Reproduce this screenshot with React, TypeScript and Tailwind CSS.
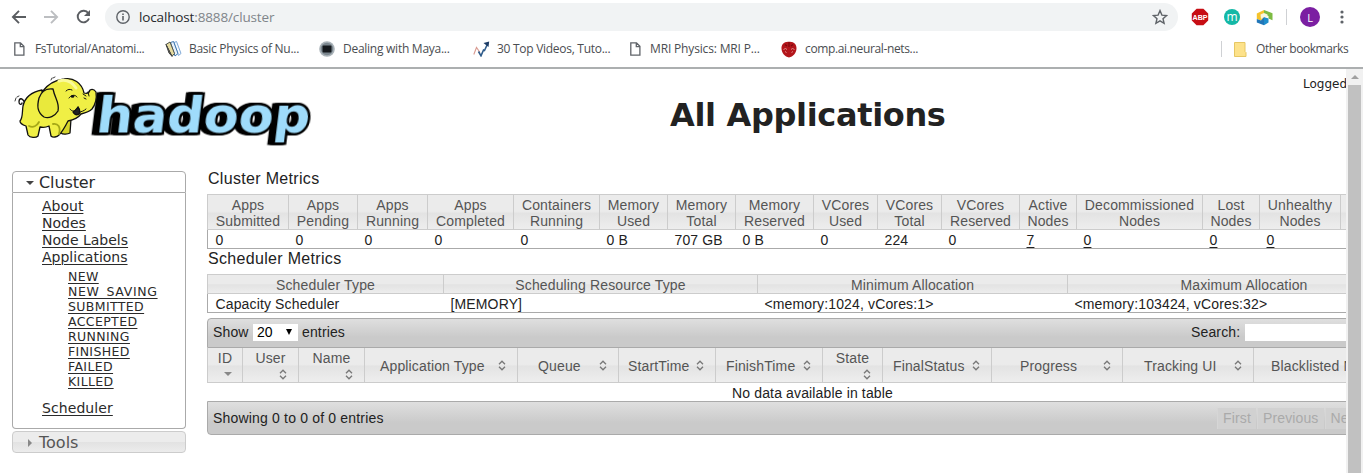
import React from "react";

const Doc = () => (
  <svg width="12" height="14" viewBox="0 0 12 14" fill="#fff" stroke="#5f6368" strokeWidth="1.3">
    <path d="M.8 .8h5.700l3.400 3.500v8.900H.8z M6.300 .8v3.800h3.600" />
  </svg>
);

const Books = () => (
  <svg width="17" height="16" viewBox="0 0 17 16" strokeWidth="1" strokeLinejoin="round">
    <path d="M9 1.500l2.500-1 4.500 12-2.500 2z" fill="#f4f9fe" stroke="#7fa9d6" />
    <path d="M5.500 1.500l3-1 4.500 12-3 2.500z" fill="#e8f1fa" stroke="#3c76ad" />
    <path d="M1 3.500l4-2.500 4.500 11.500L7 15.300z" fill="#e6dba0" stroke="#4c5148" />
    <path d="M1 3.500L7 15.300 4 12z" fill="#77785a" stroke="#444" />
  </svg>
);

const Maya = () => (
  <svg width="16" height="16" viewBox="0 0 16 16">
    <circle cx="8" cy="8" r="7.800" fill="#a9b2b8" />
    <circle cx="8" cy="8" r="6.200" fill="#7b868e" />
    <rect x="3.500" y="4.500" width="9" height="7" rx="1" fill="#15191d" />
  </svg>
);

const Chart = () => (
  <svg width="17" height="16" viewBox="0 0 17 16" fill="none">
    <path d="M.8 13.500L3.500 6.500l3.500 5" stroke="#d99a90" strokeWidth="1.100" />
    <path d="M5.500 10.500l2.500 4.300L10.500 9l1 .5L14.500 3" stroke="#2e5b8a" strokeWidth="1.600" />
    <path d="M10.500 2L16.200.5 15.500 6z" fill="#1d3c66" />
  </svg>
);

const Brain = () => (
  <svg width="16" height="17" viewBox="0 0 16 17">
    <path d="M8 .7C3 .2.3 3.500.5 7.500.7 12 4 16 8 16.400 12 16 15.300 12 15.500 7.500 15.700 3.500 13 .2 8 .7z" fill="#b3161b" />
    <path d="M8 1v5M4 3.500l2 1.500M12 3.500L10 5" stroke="#7c0a0e" strokeWidth="1.200" fill="none" />
    <path d="M2.500 8.500l2-1 1.500 1M10 8.500l1.500-1 2 1M4 10.500l1.500 1M12 10.500l-1.500 1" stroke="#eda6a3" strokeWidth=".8" fill="none" />
  </svg>
);

const bookmarks = [
  { icon: <Doc />, label: "FsTutorial/Anatomi...", left: "w-[151px]", pad: "w-[21px]", track: "tracking-[-0.32px]" },
  { icon: <Books />, label: "Basic Physics of Nu...", left: "w-[154px]", pad: "w-[24px]", track: "tracking-[-0.28px]" },
  { icon: <Maya />, label: "Dealing with Maya...", left: "w-[154px]", pad: "w-[24px]", track: "tracking-[-0.26px]" },
  { icon: <Chart />, label: "30 Top Videos, Tuto...", left: "w-[157px]", pad: "w-[24px]", track: "tracking-[-0.28px]" },
  { icon: <Doc />, label: "MRI Physics: MRI P...", left: "w-[151px]", pad: "w-[20px]", track: "tracking-[-0.16px]" },
  { icon: <Brain />, label: "comp.ai.neural-nets...", left: "w-[153px]", pad: "w-[24px]", track: "tracking-[-0.36px]" },
];

const Browser = () => (
  <div className="h-[69px] shrink-0 border-b-2 border-[#acafb0] bg-white font-['Open_Sans','Noto_Sans',sans-serif]">
    <div className="flex h-[34px] items-center pl-[11px]">
      <svg width="86" height="20" viewBox="0 0 86 20" fill="none" strokeWidth="1.900">
        <path d="M15 10H2M8 3.800L1.900 10 8 16.200" stroke="#5a5d61" />
        <path d="M33 10h13M40 3.800L46.100 10 40 16.200" stroke="#bcbec1" />
        <path d="M77.300 6.200A5.800 5.800 0 1 0 78 11.500" stroke="#5a5d61" />
        <path d="M79 3v6h-6z" fill="#5a5d61" />
      </svg>
      <div className="ml-[8px] flex h-[28px] w-[1073px] items-center rounded-full bg-[#f1f3f4] pl-[11px] pr-[10px]">
        <svg width="14" height="14" viewBox="0 0 14 14">
          <circle cx="7" cy="7" r="6.200" fill="none" stroke="#5f6368" strokeWidth="1.400" />
          <path d="M6.200 6h1.600v4.500H6.200zM6.200 3.400h1.600V5H6.200z" fill="#5f6368" />
        </svg>
        <div className="ml-[9px] grow text-[13.500px] leading-[18px] tracking-[-0.14px] text-[#27292c]">
          localhost<span className="text-[#80858a]">:8888/cluster</span>
        </div>
        <svg width="16" height="16" viewBox="0 0 16 16" fill="none" stroke="#5f6368" strokeWidth="1.400">
          <path d="M8 1.600l1.900 4.500 4.700.4-3.600 3.200 1.100 4.700L8 11.900l-4.100 2.500L5 9.700 1.400 6.500l4.700-.4z" />
        </svg>
      </div>
      <svg className="ml-[13px]" width="18" height="18" viewBox="0 0 18 18">
        <path d="M5.600.8h6.800l4.800 4.800v6.800l-4.800 4.800H5.600L.8 12.400V5.600z" fill="#c70d14" />
        <text x="1.500" y="12" fontFamily="Liberation Sans" fontWeight="bold" fontSize="8" fill="#fff" textLength="15" lengthAdjust="spacingAndGlyphs">ABP</text>
      </svg>
      <div className="ml-[15px] flex h-4 w-4 items-center justify-center rounded-full bg-[#14b8a6] pb-px text-[12px] leading-none text-white">m</div>
      <svg className="ml-[16px]" width="17" height="17" viewBox="0 0 17 17">
        <path d="M.8 4.500L8 1v7l-3 3.500L.8 10z" fill="#f5c32c" />
        <path d="M8 1l8.500 3.300v7L12.500 9.500V7L8 6z" fill="#7dbb42" />
        <path d="M.8 10L5 11.500 8 8v8.300L.8 13.500z" fill="#2176b8" />
        <path d="M8 8l4.500 1.500v4L8 16.300z" fill="#1f8ecb" />
        <path d="M4.500 5.500L8 4l3.500 1.500v3L8 8l-3 2z" fill="#f8f6df" />
      </svg>
      <div className="ml-[13px] h-4 w-px bg-[#cfd1d4]" />
      <div className="ml-[13px] flex h-5 w-5 items-center justify-center rounded-full bg-[#7b1fa2] text-[11px] leading-none text-white">L</div>
      <svg className="ml-[19px]" width="6" height="14" viewBox="0 0 6 14" fill="#5f6368">
        <circle cx="3" cy="2" r="1.600" /><circle cx="3" cy="7" r="1.600" /><circle cx="3" cy="12" r="1.600" />
      </svg>
    </div>
    <div className="flex h-[30px] items-center pl-[14px] text-[12px] leading-[16px] text-[#4a4d51]">
      {bookmarks.map((b) => (
        <div key={b.label} className={`flex shrink-0 items-center whitespace-nowrap ${b.left}`}>
          <span className={`shrink-0 ${b.pad}`}>{b.icon}</span>
          <span className={b.track}>{b.label}</span>
        </div>
      ))}
      <div className="ml-[287px] h-4 w-px bg-[#cfd1d4]" />
      <svg className="ml-[12px]" width="13" height="15" viewBox="0 0 13 15">
        <path d="M.5.5h10.500v9l1 1v4H.5z" fill="#fde28a" stroke="#e6c763" />
      </svg>
      <span className="ml-[9px] whitespace-nowrap tracking-[-0.42px]">Other bookmarks</span>
    </div>
  </div>
);

const Logo = () => (
  <svg width="304" height="80" viewBox="10 70 304 80">
    <g fontFamily="DejaVu Sans" fontWeight="bold" fontSize="50" strokeLinejoin="miter" strokeMiterlimit="3">
      <text x="0" y="0" transform="translate(95 132.500) skewX(-7)" textLength="213.500" lengthAdjust="spacingAndGlyphs" fill="#9fdcfb" stroke="#000" strokeWidth="5" paintOrder="stroke" className="[filter:drop-shadow(-2.500px_0_0_#000)_drop-shadow(-2px_0_0_#000)]">hadoop</text>
    </g>
    <g stroke="#111" strokeWidth="1.300" strokeLinejoin="round" strokeLinecap="round" fill="#f0ef45">
      <path d="M25 103c-3-6-6-5-6-1 0 3 3 3 3 1" fill="none" />
      <path d="M15 101l1-3M17 97l2-1M51 80l1-2M53 78l2-1" fill="none" strokeWidth=".8" />
      <path d="M60 122l1 11c2 2 7 1 9 0l1-14z" fill="#d6d629" />
      <path d="M42 90C31 92 25 97 23 106c-1 6 0 12-3 15 0 3 3 4 6 5l2 9c2 3 8 3 10 1l2-9c4 1 7 0 9-1l2 10c2 2 6 1 8-1 4-4 6-8 9-14 5-1 10-3 13-7 4-1 8-2 11-5 3-4 5-10 4-17-2-3-4-3-6-2-1 3-3 4-6 3-2-10-11-16-20-14-9 1-17 6-22 13z" />
      <path d="M29 126c4 2 8 0 10-4M53 124c5-1 8 3 6 10" fill="none" stroke="#a6a817" strokeWidth="1.800" />
      <path d="M53 89c-7-1-12 3-14 9-2 8-2 14 5 19 5 2 11-1 14-6 2-8-3-12-5-22z" fill="#e9e93c" />
      <path d="M73 112c2 4 6 3 7 1 0-3 0-4-2-6-2 3-3 4-5 5z" fill="#222" />
      <path d="M66 91c2-2 4-2 6-1M69 98c2-3 6-4 8-1M83 94l3 2M84 98l2 1M88 92l1 4M70 109c2 3 5 3 8-2M79 112c2 0 5-1 7-3" fill="none" strokeWidth="1" />
      <ellipse cx="72.500" cy="96.500" rx="1.800" ry="1.200" fill="#111" stroke="none" />
      <path d="M59 81c7-2 13 1 17 7" fill="none" stroke="#fafa9a" strokeWidth="3" />
    </g>
  </svg>
);

const linkCls = "underline decoration-1 underline-offset-2";
const states = ["NEW", "NEW_SAVING", "SUBMITTED", "ACCEPTED", "RUNNING", "FINISHED", "FAILED", "KILLED"];

const Sidebar = () => (
  <div className="w-[174px] shrink-0 pt-[2px] font-['DejaVu_Sans',sans-serif] text-[#2a2a2a]">
    <div className="flex h-[22px] items-center rounded-t-[4px] border border-[#aaa] pl-[13px] pt-px text-[16px] leading-[20px] tracking-[-0.1px]">
      <span className="mr-[5px] h-0 w-0 border-x-[4px] border-t-[4px] border-x-transparent border-t-[#444]" />
      Cluster
    </div>
    <div className="h-[236px] rounded-b-[4px] border border-t-0 border-[#aaa] pl-[29px] pt-[5px] text-[14px] leading-[17px]">
      {["About", "Nodes", "Node Labels", "Applications"].map((t) => (
        <div key={t}><a className={linkCls}>{t}</a></div>
      ))}
      <div className="mb-[11px] ml-[26px] mt-[3px] text-[12.500px] leading-[15px] tracking-[0.38px]">
        {states.map((t) => (
          <div key={t}><a className={`${linkCls} ${t === "NEW_SAVING" ? "tracking-[0.65px]" : ""}`}>{t}</a></div>
        ))}
      </div>
      <a className={`${linkCls} tracking-[0.08px]`}>Scheduler</a>
    </div>
    <div className="mt-[2px] flex h-[22px] items-center rounded-[4px] border border-[#ccc] bg-[linear-gradient(#ececec_50%,#e2e2e2_50%,#ececec)] pl-[15px] pt-px text-[16px] leading-[20px] text-[#555]">
      <span className="mr-[7px] h-0 w-0 border-y-[4px] border-l-[4px] border-y-transparent border-l-[#888]" />
      Tools
    </div>
  </div>
);

const metrics: [string, string, string, boolean?][] = [
  ["Apps", "Submitted", "0"], ["Apps", "Pending", "0"], ["Apps", "Running", "0"], ["Apps", "Completed", "0"],
  ["Containers", "Running", "0"], ["Memory", "Used", "0 B"], ["Memory", "Total", "707 GB"], ["Memory", "Reserved", "0 B"],
  ["VCores", "Used", "0"], ["VCores", "Total", "224"], ["VCores", "Reserved", "0"], ["Active", "Nodes", "7", true],
  ["Decommissioned", "Nodes", "0", true], ["Lost", "Nodes", "0", true], ["Unhealthy", "Nodes", "0", true], ["", "", ""],
];
const headCell = "border-l border-t border-b border-[#ccc] text-center text-[#555]";
const headFill = "bg-[linear-gradient(#ebebeb_48%,#e3e3e3_54%,#eeeeee)]";

const Sort = () => (
  <svg className="shrink-0" width="8" height="11" viewBox="0 0 8 11" fill="none" stroke="#777" strokeWidth="1.300">
    <path d="M1 4.200l3-3 3 3M1 6.800l3 3 3-3" />
  </svg>
);

const wide = [
  { t: "Application Type", p: "pl-[15px]" }, { t: "Queue", p: "pl-[20px]" },
  { t: "StartTime", p: "pl-[9px]" }, { t: "FinishTime", p: "pl-[10px]" },
];
const wide2 = [
  { t: "FinalStatus", p: "pl-[10px]" }, { t: "Progress", p: "pl-[28px]" },
  { t: "Tracking UI", p: "pl-[21px]" }, { t: "Blacklisted Nodes", p: "pl-[17px]" },
];
const WideHead = ({ t, p }: { t: string; p: string }) => (
  <div className={`flex items-center justify-between whitespace-nowrap border-l border-[#ccc] pr-[11px] pt-px ${p}`}>
    <span>{t}</span><Sort />
  </div>
);
const StackHead = ({ t }: { t: string }) => (
  <div className="flex flex-col border-l border-[#ccc] px-[11px] pt-[2px]">
    <span className="text-center leading-[16px]">{t}</span>
    <span className="mt-[3px] flex justify-end"><Sort /></span>
  </div>
);

const Content = () => (
  <div className="ml-[21px] w-[1213px] shrink-0 font-['Liberation_Sans',Arial,sans-serif] text-[14px] leading-[16px] tracking-[0.14px] text-[#222]">
    <div className="h-[25px] pl-px pt-px text-[16px] leading-[18px] tracking-[0.32px]">Cluster Metrics</div>
    <div className={`grid h-[36px] grid-cols-[81px_69px_70px_86px_86px_68px_68px_78px_64px_64px_78px_57px_126px_57px_81px_80px] ${headFill}`}>
      {metrics.map((m, i) => (
        <div key={i} className={`${headCell} pt-[2px]`}>{m[0]}<br />{m[1]}</div>
      ))}
    </div>
    <div className="grid h-[19px] grid-cols-[80px_69px_70px_86px_86px_68px_68px_78px_64px_64px_78px_57px_126px_57px_81px_80px] border-b border-l border-[#aaa]">
      {metrics.map((m, i) => (
        <div key={i} className="pl-[7.500px] pt-[2px]"><span className={m[3] ? linkCls : ""}>{m[2]}</span></div>
      ))}
    </div>
    <div className="h-[25px] pl-px pt-px text-[16px] leading-[18px] tracking-[0.32px]">Scheduler Metrics</div>
    <div className={`grid h-[20px] grid-cols-[236px_314px_310px_353px] ${headFill}`}>
      {["Scheduler Type", "Scheduling Resource Type", "Minimum Allocation", "Maximum Allocation"].map((t) => (
        <div key={t} className={`${headCell} pt-[2px]`}>{t}</div>
      ))}
    </div>
    <div className="grid h-[19px] grid-cols-[235px_314px_310px_353px] border-b border-l border-[#aaa] pt-[2px]">
      {["Capacity Scheduler", "[MEMORY]", "<memory:1024, vCores:1>", "<memory:103424, vCores:32>"].map((t) => (
        <div key={t} className="pl-[7.500px]">{t}</div>
      ))}
    </div>
    <div className="mt-[5px] flex h-[30px] items-center rounded-tl-[4px] border border-[#aaa] bg-[linear-gradient(#dfdfdf,#cacaca_65%,#cacaca)] pb-[2px] pl-[5px]">
      <span className="w-[36px]">Show</span>
      <span className="ml-[4px] flex h-[17px] w-[45px] shrink-0 items-center justify-between bg-white pl-[4px] pr-[6px] tracking-[0px] text-black">
        20
        <span className="h-0 w-0 border-x-[3px] border-t-[6px] border-x-transparent border-t-black" />
      </span>
      <span className="ml-[4px] w-[50px]">entries</span>
      <span className="ml-[839px] w-[50px]">Search:</span>
      <span className="ml-[4px] h-[17px] w-[150px] bg-white" />
    </div>
    <div className={`grid h-[35px] grid-cols-[35px_56px_66px_153px_101px_97px_107px_60px_109px_131px_131px_166px] border-b border-[#ccc] text-[#555] ${headFill}`}>
      <div className="flex flex-col items-center border-l border-[#ccc] pt-[2px]">
        <span>ID</span>
        <span className="ml-[5px] mt-[6px] h-0 w-0 border-x-[4px] border-t-[4px] border-x-transparent border-t-[#888]" />
      </div>
      <StackHead t="User" />
      <StackHead t="Name" />
      {wide.map((w) => <WideHead key={w.t} {...w} />)}
      <StackHead t="State" />
      {wide2.map((w) => <WideHead key={w.t} {...w} />)}
    </div>
    <div className="h-[18px] pr-[2px] pt-[2px] text-center">No data available in table</div>
    <div className="flex h-[34px] items-center rounded-bl-[4px] border border-[#aaa] bg-[linear-gradient(#dfdfdf,#cacaca_65%,#cacaca)] pl-[5px]">
      <span className="w-[175px] whitespace-nowrap tracking-[0.18px]">Showing 0 to 0 of 0 entries</span>
      <div className="ml-[829px] flex text-[#aaa]">
        {["First", "Previous", "Next", "Last"].map((t) => (
          <span key={t} className="mr-px h-[21px] border-l border-[#d6d6d6] bg-[#d1d1d1] px-[5px] pt-[2px]">{t}</span>
        ))}
      </div>
    </div>
  </div>
);

export default function App() {
  return (
    <div className="flex h-[473px] w-[1363px] flex-col overflow-hidden bg-white">
      <Browser />
      <div className="flex min-h-0 grow">
        <div className="flex w-[1346px] shrink-0 flex-col overflow-hidden font-['DejaVu_Sans',sans-serif] text-[#222]">
          <div className="flex h-[100px] shrink-0 items-start">
            <div className="ml-[10px] mt-px w-[304px] shrink-0"><Logo /></div>
            <h1 className="ml-[356px] mt-[27px] w-[277px] shrink-0 whitespace-nowrap text-[32px] font-bold leading-[38px] tracking-[-0.34px]">All Applications</h1>
            <div className="ml-[356px] mt-[7px] shrink-0 whitespace-nowrap text-[12px] leading-[16px]">Logged in as: dr.who</div>
          </div>
          <div className="flex pl-[12px]">
            <Sidebar />
            <Content />
          </div>
        </div>
        <div className="flex w-[17px] shrink-0 flex-col items-center bg-[#f1f1f1]">
          <div className="mt-[6px] h-0 w-0 border-x-[4px] border-b-[4px] border-x-transparent border-b-[#a0a0a0]" />
          <div className="mt-[6px] w-[13px] grow bg-[#c1c1c1]" />
        </div>
      </div>
    </div>
  );
}
